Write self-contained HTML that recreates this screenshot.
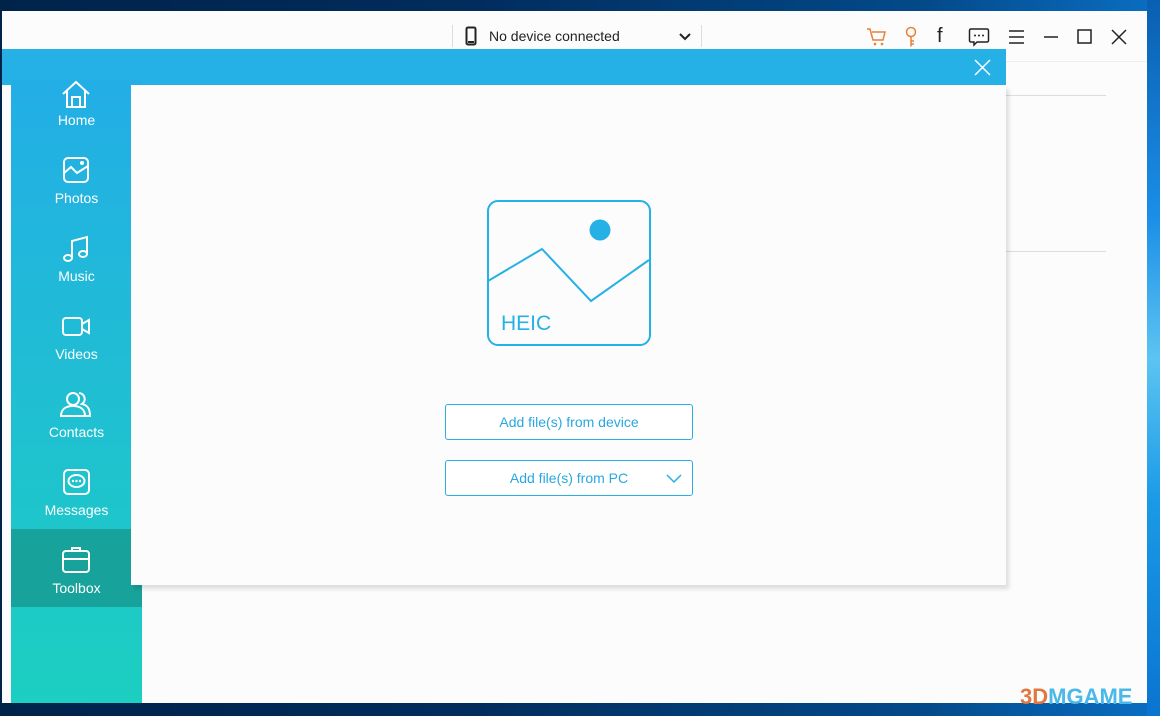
<!DOCTYPE html>
<html><head><meta charset="utf-8"><style>
*{margin:0;padding:0;box-sizing:border-box}
body{width:1160px;height:716px;overflow:hidden;position:relative;font-family:"Liberation Sans",sans-serif;background:linear-gradient(90deg,#00234a 0%,#012c5c 40%,#034a8a 80%,#0a6fc4 100%)}
.abs{position:absolute}
.win{left:2px;top:11px;width:1145px;height:692px;background:#fcfcfc}
.right{left:1147px;top:0;width:13px;height:716px;background:linear-gradient(180deg,#0a5fb0,#1a8ee6 30%,#5cc4f2 50%,#1a9ae6 70%,#0a74d0)}
.side{left:11px;top:80px;width:131px;height:623px;background:linear-gradient(180deg,#23aee6,#1ccfc0);z-index:2}
.item{position:absolute;left:11px;width:131px;height:78px;color:#fff;text-align:center;font-size:14px;z-index:3}
.item svg{position:absolute;left:50px;top:0}
.item span{position:absolute;left:0;right:0}
.dlghead{left:2px;top:49px;width:1004px;height:36px;background:#25b0e6;z-index:1}
.dlg{left:131px;top:85px;width:875px;height:500px;background:#fcfcfc;box-shadow:3px 4px 4px rgba(0,0,0,.12);z-index:4}
.btn{position:absolute;left:445px;width:248px;height:36px;border:1px solid #28b0e4;border-radius:3px;color:#28a8e0;font-size:14px;text-align:center;line-height:34px;background:#fff;z-index:5}
.line{height:1px;background:#ddd}
</style></head><body>
<div class="abs right"></div>
<div class="abs win"></div>
<div class="abs line" style="left:1006px;top:95px;width:100px"></div>
<div class="abs line" style="left:1006px;top:251px;width:100px"></div>
<div class="abs line" style="left:1006px;top:61px;width:141px;background:#eee"></div>
<!-- title bar -->
<div class="abs" style="left:452px;top:25px;width:1px;height:22px;background:#ddd"></div>
<div class="abs" style="left:701px;top:25px;width:1px;height:22px;background:#ddd"></div>
<svg class="abs" style="left:465px;top:26px" width="12" height="20"><rect x="1.5" y="1.5" width="9" height="17" rx="1.5" fill="none" stroke="#222" stroke-width="2"/><rect x="3" y="15" width="6" height="2" fill="#222"/></svg>
<div class="abs" style="left:489px;top:28px;font-size:14px;color:#222">No device connected</div>
<svg class="abs" style="left:678px;top:32px" width="14" height="10"><path d="M2 2l5 5 5-5" fill="none" stroke="#222" stroke-width="2"/></svg>
<svg class="abs" style="left:866px;top:27px" width="22" height="20"><path d="M1 2h3l3 11h10l2-8H6" fill="none" stroke="#e8803a" stroke-width="1.5"/><circle cx="9" cy="17" r="1.3" fill="#e8803a"/><circle cx="16" cy="17" r="1.3" fill="#e8803a"/></svg>
<svg class="abs" style="left:903px;top:26px" width="16" height="22"><circle cx="8" cy="6" r="4.5" fill="none" stroke="#e8803a" stroke-width="1.5"/><path d="M8 10.5v10M8 15h3M8 18h3" fill="none" stroke="#e8803a" stroke-width="1.5"/></svg>
<div class="abs" style="left:937px;top:25px;font-size:20px;color:#222">f</div>
<svg class="abs" style="left:968px;top:27px" width="22" height="20"><path d="M3 2h16a1.5 1.5 0 0 1 1.5 1.5v10a1.5 1.5 0 0 1-1.5 1.5H9l-3 3v-3H3a1.5 1.5 0 0 1-1.5-1.5v-10A1.5 1.5 0 0 1 3 2z" fill="none" stroke="#222" stroke-width="1.5"/><circle cx="7" cy="8.5" r="1" fill="#222"/><circle cx="11" cy="8.5" r="1" fill="#222"/><circle cx="15" cy="8.5" r="1" fill="#222"/></svg>
<svg class="abs" style="left:1008px;top:29px" width="18" height="16"><path d="M1 2h15M1 8h15M1 14h15" stroke="#222" stroke-width="1.5"/></svg>
<svg class="abs" style="left:1043px;top:29px" width="16" height="16"><path d="M1 8h14" stroke="#222" stroke-width="1.5"/></svg>
<svg class="abs" style="left:1077px;top:29px" width="16" height="16"><rect x="1" y="1" width="13" height="13" fill="none" stroke="#222" stroke-width="1.5"/></svg>
<svg class="abs" style="left:1111px;top:29px" width="16" height="16"><path d="M1 1l14 14M15 1L1 15" stroke="#222" stroke-width="1.5"/></svg>
<div class="abs dlghead"></div>
<svg class="abs" style="left:974px;top:59px;z-index:2" width="17" height="17"><path d="M1 1l15 15M16 1L1 16" stroke="#fff" stroke-width="1.5"/></svg>
<!-- sidebar -->
<div class="abs side"></div>
<div class="abs" style="left:11px;top:529px;width:131px;height:78px;background:#17a39b;z-index:2"></div>
<div class="item" style="top:80px"><svg width="30" height="30"><path d="M2 14L15 2l13 12M6 11v16h18V11M11 27v-10h8v10" fill="none" stroke="#fff" stroke-width="2"/></svg><span style="top:32px">Home</span></div>
<div class="item" style="top:156px"><svg width="30" height="30"><rect x="3" y="2" width="24" height="24" rx="4" fill="none" stroke="#fff" stroke-width="2"/><path d="M3 17l7-6 6 6 11-7" fill="none" stroke="#fff" stroke-width="2"/><circle cx="21" cy="7" r="2" fill="#fff"/></svg><span style="top:34px">Photos</span></div>
<div class="item" style="top:234px"><svg width="30" height="30"><path d="M11 24V7l15-4v17" fill="none" stroke="#fff" stroke-width="2"/><ellipse cx="7" cy="24" rx="4" ry="3" fill="none" stroke="#fff" stroke-width="2"/><ellipse cx="22" cy="20" rx="4" ry="3" fill="none" stroke="#fff" stroke-width="2"/></svg><span style="top:34px">Music</span></div>
<div class="item" style="top:312px"><svg width="30" height="30"><rect x="2" y="6" width="19" height="17" rx="3" fill="none" stroke="#fff" stroke-width="2"/><path d="M21 12l7-4v13l-7-4" fill="none" stroke="#fff" stroke-width="2"/></svg><span style="top:34px">Videos</span></div>
<div class="item" style="top:390px"><svg width="34" height="30" style="left:48px"><circle cx="14" cy="9" r="6" fill="none" stroke="#fff" stroke-width="2"/><path d="M2 26c0-7 5-10 12-10s12 3 12 10z" fill="none" stroke="#fff" stroke-width="2"/><path d="M20 3a6 6 0 0 1 3 11c5 1 8 4 8 12h-5" fill="none" stroke="#fff" stroke-width="2"/></svg><span style="top:34px">Contacts</span></div>
<div class="item" style="top:468px"><svg width="30" height="30"><rect x="3" y="2" width="25" height="24" rx="4" fill="none" stroke="#fff" stroke-width="2"/><ellipse cx="15.5" cy="13" rx="8" ry="6" fill="none" stroke="#fff" stroke-width="2"/><circle cx="12" cy="13" r="1.2" fill="#fff"/><circle cx="15.5" cy="13" r="1.2" fill="#fff"/><circle cx="19" cy="13" r="1.2" fill="#fff"/></svg><span style="top:34px">Messages</span></div>
<div class="item" style="top:546px"><svg width="30" height="30"><rect x="2" y="5" width="26" height="21" rx="3" fill="none" stroke="#fff" stroke-width="2"/><path d="M2 13h26M11 5V2h8v3" fill="none" stroke="#fff" stroke-width="2"/></svg><span style="top:34px">Toolbox</span></div>
<!-- dialog -->
<div class="abs dlg"></div>
<svg class="abs" style="left:486px;top:200px;z-index:5" width="166" height="147"><rect x="2" y="1" width="162" height="144" rx="10" fill="none" stroke="#25b0e6" stroke-width="2"/><path d="M2 81l54-32 49 52 58-41" fill="none" stroke="#25b0e6" stroke-width="2"/><circle cx="114" cy="30" r="10.5" fill="#25b0e6"/><text x="15" y="130" font-family="Liberation Sans,sans-serif" font-size="21" fill="#25b0e6">HEIC</text></svg>
<div class="btn" style="top:404px">Add file(s) from device</div>
<div class="btn" style="top:460px">Add file(s) from PC</div>
<svg class="abs" style="left:666px;top:474px;z-index:6" width="16" height="10"><path d="M1 1l7 7 7-7" fill="none" stroke="#28b0e4" stroke-width="1.5"/></svg>
<div class="abs" style="left:1020px;top:684px;font-size:22px;font-weight:bold;color:#e07840">3D<span style="color:#4ab8e8">MGAME</span></div>
</body></html>
